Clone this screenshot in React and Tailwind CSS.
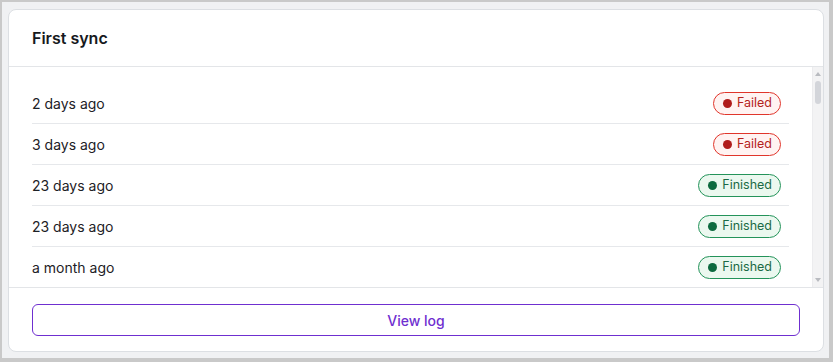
import React from 'react'

const recent = [
    { when: '2 days ago', status: 'failed' },
    { when: '3 days ago', status: 'failed' },
    { when: '23 days ago', status: 'finished' },
    { when: '23 days ago', status: 'finished' },
    { when: 'a month ago', status: 'finished' },
    { when: 'a month ago', status: 'finished' },
    { when: '2 months ago', status: 'finished' },
    { when: '2 months ago', status: 'failed' },
]

const older = Array.from({ length: 36 }, (_, i) => ({
    when: `${3 + Math.floor(i / 4)} months ago`,
    status: i % 5 === 2 ? 'failed' : 'finished',
}))

const runs = [...recent, ...older]

function StatusBadge({ status }) {
    if (status === 'failed') {
        return (
            <span className="flex items-center gap-[5px] h-[23px] pl-[9px] pr-[8px] rounded-full border border-[#e0352b] bg-[#fff3f2] text-[#b4231b] text-[12.5px] leading-none">
                <span className="w-[9px] h-[9px] rounded-full bg-[#b01c1c]" />
                Failed
            </span>
        )
    }
    return (
        <span className="flex items-center gap-[5px] h-[23px] pl-[9px] pr-[8px] rounded-full border border-[#24935a] bg-[#ebf8ef] text-[#1c6a45] text-[12.5px] leading-none">
            <span className="w-[9px] h-[9px] rounded-full bg-[#0d6a3f]" />
            Finished
        </span>
    )
}

function ScrollTrack() {
    return (
        <div className="w-[11px] shrink-0 flex flex-col items-center bg-[#f3f3f4] border-l border-[#ececee]">
            <div className="h-[14px] flex items-center justify-center">
                <svg width="6" height="4" viewBox="0 0 6 4"><polygon points="3,0 6,4 0,4" fill="#b9bbc0" /></svg>
            </div>
            <div className="w-[6px] h-[23px] rounded-full bg-[#d3d5da]" />
            <div className="flex-1" />
            <div className="h-[14px] flex items-center justify-center">
                <svg width="6" height="4" viewBox="0 0 6 4"><polygon points="0,0 6,0 3,4" fill="#b9bbc0" /></svg>
            </div>
        </div>
    )
}

export default function App() {
    return (
        <div className="h-[362px] w-[833px] border-t-2 border-l-2 border-r-4 border-b-4 border-[#c9c9c9] bg-[#f0f1f3] pt-[7px] pl-[6px] pr-[5px] pb-[6px] font-['Inter',sans-serif]">
            <div className="h-full flex flex-col bg-white border border-[#dcdfe3] rounded-lg overflow-hidden">
                {/* Header */}
                <div className="h-[57px] shrink-0 flex items-center px-[23px] border-b border-[#e3e5e8]">
                    <h2 className="text-[16px] font-semibold text-[#16191d]">First sync</h2>
                </div>

                {/* Run list */}
                <div className="flex-1 min-h-0 flex">
                    <div className="flex-1 min-w-0 overflow-hidden pt-[16px] px-[23px]">
                        {runs.map((run, i) => (
                            <div key={i} className="h-[41px] flex items-center justify-between pr-2 border-b border-[#e6e8eb]">
                                <span className="text-[14px] text-[#1d2126]">{run.when}</span>
                                <StatusBadge status={run.status} />
                            </div>
                        ))}
                    </div>
                    <ScrollTrack />
                </div>

                {/* Footer */}
                <div className="shrink-0 border-t border-[#e3e5e8] px-[23px] pt-4 pb-[15px]">
                    <button className="w-full h-[32px] rounded-md border border-[#6f2fd0] text-[#6f2fd0] text-[14px] font-medium">
                        View log
                    </button>
                </div>
            </div>
        </div>
    )
}
